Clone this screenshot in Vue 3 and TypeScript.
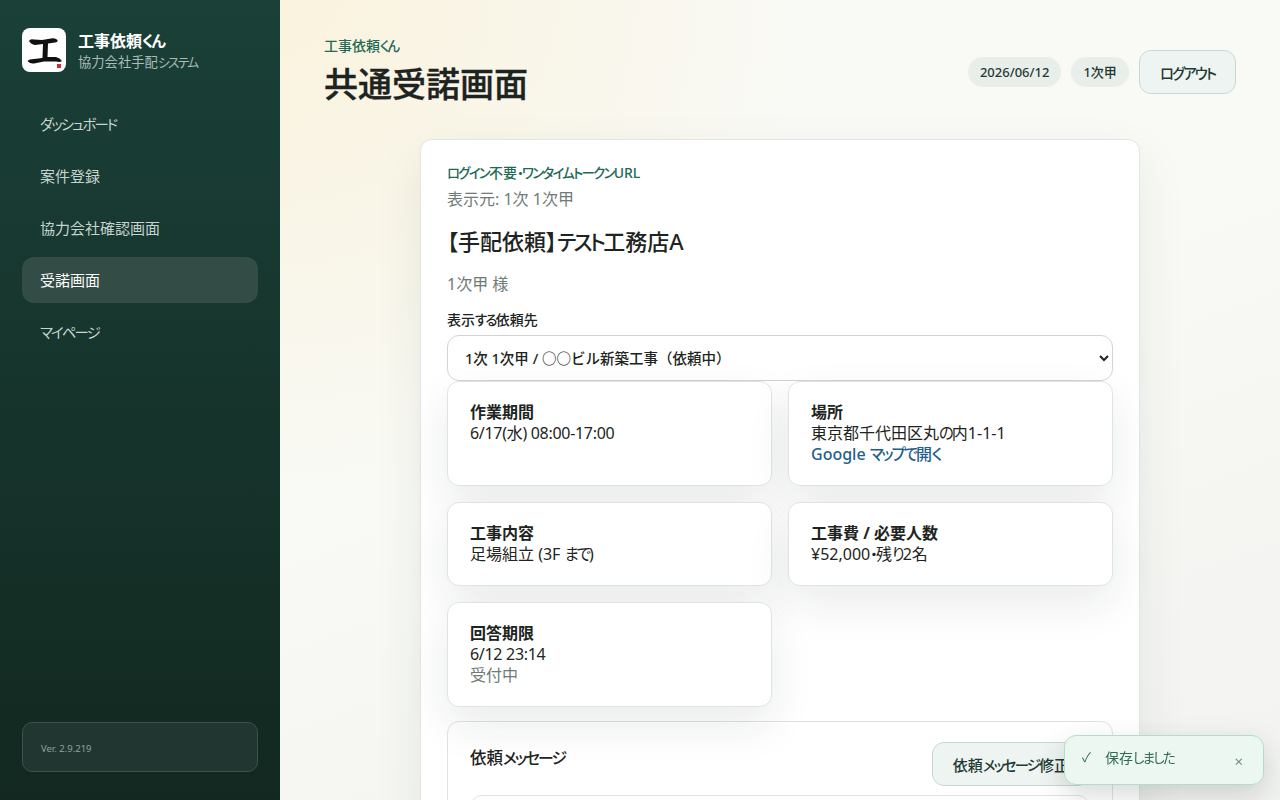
<script setup lang="ts">
import { h, ref } from 'vue'

const navItems = ['ダッシュボード', '案件登録', '協力会社確認画面', '受諾画面', 'マイページ']
const activeNav = '受諾画面'
const target = ref('1')
const toastVisible = ref(true)

// kana sit tighter than kanji in the original UI font
const Jp = ({ t }: { t: string }) =>
  t.split(/([\u3041-\u30ff]+)/).map((part, i) => (i % 2 ? h('span', { class: 'kana' }, part) : part))
</script>

<template>
  <div class="shell">
    <aside class="sidebar">
      <div class="brand">
        <div class="logo">
          <svg viewBox="0 0 44 44" width="44" height="44">
            <path d="M7 13 Q8 10.5 12 11.5 L20 12 L29 10.5 Q33 9.5 35.5 12 Q36 14 33 14.5 L26 15.5 L25.5 29 L34 29 Q38 30 40 33 Q38 34.5 34 33.5 L22 33.5 L12 35.5 Q8 36 5.5 33 Q7 31 12 31 L20.5 30 L21 16 L13 17 Q9 16.5 7 13 Z" fill="#111" />
            <rect x="35" y="36" width="4" height="4" fill="#d42a36" />
          </svg>
        </div>
        <div class="brand-text">
          <div class="brand-name"><Jp t="工事依頼くん" /></div>
          <div class="brand-sub"><Jp t="協力会社手配システム" /></div>
        </div>
      </div>
      <nav class="nav">
        <a
          v-for="item in navItems"
          :key="item"
          class="nav-item"
          :class="{ active: item === activeNav }"><Jp :t="item" /></a>
      </nav>
      <div class="version">Ver. 2.9.219</div>
    </aside>

    <main class="main">
      <header class="topbar">
        <div>
          <div class="eyebrow"><Jp t="工事依頼くん" /></div>
          <h1 class="page-title">共通受諾画面</h1>
        </div>
        <div class="top-actions">
          <span class="pill">2026/06/12</span>
          <span class="pill">1次甲</span>
          <button class="btn"><Jp t="ログアウト" /></button>
        </div>
      </header>

      <section class="panel">
        <div class="token-note"><Jp t="ログイン不要・ワンタイムトークンURL" /></div>
        <div class="muted source">表示元: 1次 1次甲</div>
        <h2 class="req-title"><Jp t="【手配依頼】テスト工務店A" /></h2>
        <div class="muted addressee">1次甲 様</div>
        <label class="field-label" for="target"><Jp t="表示する依頼先" /></label>
        <select id="target" v-model="target" class="select">
          <option value="1">1次 1次甲 / ○○ビル新築工事（依頼中）</option>
        </select>

        <div class="info-grid">
          <div class="info-card">
            <strong>作業期間</strong>
            <div class="num">6/17(水) 08:00-17:00</div>
          </div>
          <div class="info-card">
            <strong>場所</strong>
            <div><Jp t="東京都千代田区丸の内1-1-1" /></div>
            <a class="map-link"><Jp t="Google マップで開く" /></a>
          </div>
          <div class="info-card">
            <strong>工事内容</strong>
            <div><Jp t="足場組立 (3F まで)" /></div>
          </div>
          <div class="info-card">
            <strong>工事費 / 必要人数</strong>
            <div><Jp t="¥52,000・残り2名" /></div>
          </div>
          <div class="info-card">
            <strong>回答期限</strong>
            <div class="num">6/12 23:14</div>
            <div class="muted"><Jp t="受付中" /></div>
          </div>
        </div>

        <div class="message-card">
          <div class="message-head">
            <strong class="message-title"><Jp t="依頼メッセージ" /></strong>
            <button class="btn"><Jp t="依頼メッセージ修正" /></button>
          </div>
          <div class="message-body" />
        </div>
      </section>
    </main>

    <div v-if="toastVisible" class="toast">
      <span class="toast-check">✓</span>
      <span class="toast-text"><Jp t="保存しました" /></span>
      <span class="toast-close" @click="toastVisible = false">×</span>
    </div>
  </div>
</template>

<style>
html,
body {
  margin: 0;
  height: 100%;
  overflow: hidden;
}
.kana {
  font-size: 0.96em;
  letter-spacing: -0.13em;
}
</style>

<style scoped>
.shell {
  display: grid;
  grid-template-columns: 280px 1fr;
  height: 800px;
  overflow: hidden;
  font-family: "Noto Sans", "Noto Sans CJK JP", sans-serif;
  color: #1d2421;
  font-feature-settings: "palt";
}
.sidebar {
  display: flex;
  flex-direction: column;
  padding: 28px 22px;
  box-sizing: border-box;
  height: 800px;
  background: linear-gradient(180deg, #1a4038 0%, #122820 100%);
  color: #fff;
}
.brand {
  display: flex;
  align-items: center;
  gap: 13px;
  margin-bottom: 29px;
}
.logo {
  width: 44px;
  height: 44px;
  border-radius: 8px;
  background: #fff;
  flex: none;
}
.logo svg {
  display: block;
}
.brand-text {
  margin-left: -1px;
  padding-top: 2px;
}
.brand-name {
  font-size: 16px;
  font-weight: 700;
  line-height: 21px;
}
.brand-sub {
  font-size: 13.3px;
  line-height: 20px;
  color: #a9bbb5;
}
.nav {
  display: flex;
  flex-direction: column;
  gap: 6px;
}
.nav-item {
  padding: 0 18px;
  height: 46px;
  line-height: 46px;
  border-radius: 12px;
  font-size: 15px;
  color: #c6d4cf;
}
.nav-item.active {
  background: #334c45;
  color: #fff;
}
.version {
  margin-top: auto;
  height: 50px;
  line-height: 51px;
  box-sizing: border-box;
  padding: 0 18px;
  border: 1px solid #3c534c;
  border-radius: 10px;
  background: #213630;
  color: #8fa19c;
  font-size: 9.5px;
}
.main {
  padding: 34px 44px 0;
  min-width: 0;
  background:
    radial-gradient(circle at 0 0, rgba(250, 240, 214, 0.75) 0, rgba(250, 240, 214, 0) 520px),
    linear-gradient(160deg, #f9f9f4 0%, #f9faf6 40%, #f1f2ef 100%);
}
.topbar {
  display: flex;
  justify-content: space-between;
  align-items: center;
  height: 76px;
  margin-bottom: 29px;
}
.eyebrow {
  font-size: 14px;
  font-weight: 500;
  line-height: 24px;
  color: #1f6a55;
}
.page-title {
  margin: 1px 0 0;
  font-size: 34px;
  font-weight: 500;
  line-height: 51px;
  color: #1c2320;
  -webkit-text-stroke: 0.4px #1c2320;
}
.top-actions {
  display: flex;
  align-items: center;
  gap: 10px;
}
.pill {
  height: 30px;
  line-height: 30px;
  padding: 0 12px;
  border-radius: 15px;
  background: #e8eeea;
  font-size: 13px;
  font-weight: 500;
  color: #1f3a33;
}
.btn {
  height: 44px;
  padding: 0 20px;
  border: 1px solid #c9d8d2;
  border-radius: 12px;
  background: #eef4f1;
  font: inherit;
  font-size: 15px;
  font-weight: 500;
  color: #1f3a33;
}
.panel {
  width: 720px;
  box-sizing: border-box;
  margin: 0 auto;
  padding: 23px 26px 24px;
  background: #fff;
  border: 1px solid #e2e6e3;
  border-radius: 12px;
  box-shadow: 0 18px 50px rgba(30, 50, 45, 0.08);
}
.token-note {
  font-size: 14px;
  line-height: 20px;
  font-weight: 500;
  color: #1f6a55;
}
.muted {
  color: #6f7b77;
}
.source {
  font-size: 16px;
  line-height: 22px;
  margin-top: 5px;
}
.req-title {
  margin: 15px 0 0;
  font-size: 22px;
  font-weight: 500;
  line-height: 32px;
}
.addressee {
  font-size: 16px;
  line-height: 22px;
  margin-top: 15px;
}
.field-label {
  display: block;
  margin-top: 15px;
  font-size: 14px;
  font-weight: 500;
  line-height: 20px;
}
.select {
  display: block;
  width: 100%;
  height: 46px;
  margin-top: 5px;
  padding: 0 13px;
  border: 1px solid #cfd6d2;
  border-radius: 12px;
  background: #fff;
  font: inherit;
  font-size: 14.5px;
  font-weight: 500;
  font-feature-settings: normal;
  color: #1d2421;
}
.info-grid {
  display: grid;
  grid-template-columns: 1fr 1fr;
  gap: 16px;
}
.info-card {
  padding: 20px 22px;
  border: 1px solid #e0e4e1;
  border-radius: 12px;
  background: #fff;
  font-size: 16px;
  line-height: 21px;
  box-shadow: 0 18px 44px rgba(20, 30, 28, 0.09);
}
.info-card > * {
  display: block;
  height: 21px;
}
.info-card strong {
  font-weight: 700;
}
.num {
  letter-spacing: -0.3px;
}
.map-link {
  color: #1f5f8b;
  font-weight: 500;
}
.message-card {
  margin-top: 14px;
  padding: 20px 22px;
  border: 1px solid #e0e4e1;
  border-radius: 12px;
}
.message-head {
  display: flex;
  justify-content: space-between;
  align-items: flex-start;
}
.message-title {
  margin-top: 3px;
  font-size: 16.5px;
  font-weight: 500;
}
.message-body {
  height: 60px;
  margin-top: 9px;
  border: 1px solid #e0e4e1;
  border-radius: 12px;
}
.toast {
  position: fixed;
  right: 16px;
  bottom: 15px;
  width: 200px;
  height: 50px;
  box-sizing: border-box;
  display: flex;
  align-items: center;
  padding: 0 20px 7px 17px;
  border: 1px solid #b5dcc5;
  border-radius: 12px;
  background: #edf7f1;
  color: #2f6b55;
  font-size: 14px;
  box-shadow: 0 10px 28px rgba(30, 50, 45, 0.18);
}
.toast-check {
  width: 23px;
  font-size: 13px;
}
.toast-text {
  flex: 1;
}
.toast-close {
  margin-top: 9px;
  color: #6f8f83;
  font-size: 15px;
}
</style>
